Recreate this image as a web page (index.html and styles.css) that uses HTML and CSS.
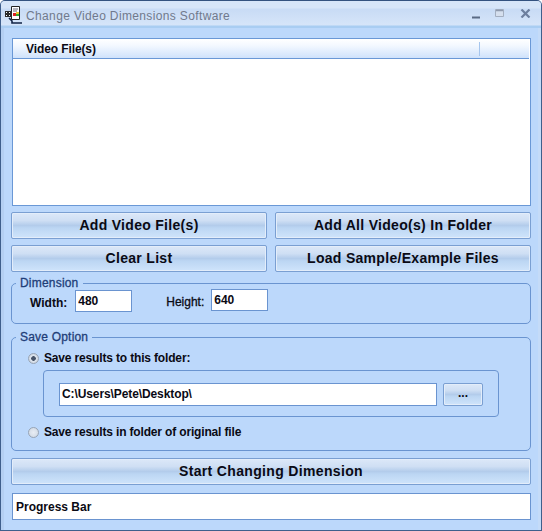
FILE: index.html
```html
<!doctype html>
<html lang="en">
<head>
<meta charset="UTF-8">
<title>Change Video Dimensions Software</title>
<link rel="stylesheet" href="styles.css">
</head>
<body>
<div class="window">
    <div class="titlebar">
        <svg class="app-icon" width="18" height="18" viewBox="0 0 18 18">
            <path d="M6.5 .5h8v13h-8z" fill="#fff" stroke="#222"/>
            <path d="M0 5h7v6H0z" fill="#2b2b2b"/>
            <path d="M1 6h1v1H1zM4 6h1v1H4zM1 9h1v1H1zM4 9h1v1H4z" fill="#fff"/>
            <path d="M8 3h5M8 5h4" stroke="#667"/>
            <path d="M8 7h3v3H8z" fill="#d22"/>
            <path d="M11 6h3v2h-3z" fill="#ec3"/>
            <path d="M11 8h3v2h-3z" fill="#3a3"/>
            <path d="M4 12l3 3v2h10" fill="none" stroke="#124" stroke-width="1.6"/>
        </svg>
        <span class="title">Change Video Dimensions Software</span>
        <div class="controls">
            <svg class="ctl-min" width="8" height="3" viewBox="0 0 8 3"><path d="M0 1.5h8" stroke="#5a6b85" stroke-width="2"/></svg>
            <svg width="10" height="9" viewBox="0 0 10 9"><path d="M.5.5h8v7h-8z" fill="#d5dfee" stroke="#a3aec0"/><path d="M1 1.5h7" stroke="#8f9aae" stroke-width="1.5"/></svg>
            <svg width="11" height="9" viewBox="0 0 11 9"><path d="M1.5.5l8 8M9.5.5l-8 8" stroke="#6d7f9e" stroke-width="2.2"/></svg>
        </div>
    </div>

    <div class="content">
        <div class="listbox">
            <div class="list-head">
                <span class="col-name">Video File(s)</span>
                <span class="col-rest"></span>
            </div>
        </div>

        <div class="btn-grid">
            <button class="btn">Add Video File(s)</button>
            <button class="btn">Add All Video(s) In Folder</button>
            <button class="btn">Clear List</button>
            <button class="btn">Load Sample/Example Files</button>
        </div>

        <fieldset class="group dimension">
            <legend>Dimension</legend>
            <label class="dim-label width-label">Width:</label>
            <input class="field dim-input width-input" value="480">
            <label class="dim-label height-label">Height:</label>
            <input class="field dim-input height-input" value="640">
        </fieldset>

        <fieldset class="group save">
            <legend>Save Option</legend>
            <div class="radio-row first">
                <span class="radio checked"></span>
                <span>Save results to this folder:</span>
            </div>
            <div class="folder-box">
                <input class="field folder-input" value="C:\Users\Pete\Desktop\">
                <button class="btn browse">...</button>
            </div>
            <div class="radio-row second">
                <span class="radio"></span>
                <span>Save results in folder of original file</span>
            </div>
        </fieldset>

        <button class="btn start">Start Changing Dimension</button>
        <div class="progress">Progress Bar</div>
    </div>
</div>
</body>
</html>
```

FILE: styles.css
```css
* {
    box-sizing: border-box;
}

html, body {
    margin: 0;
    padding: 0;
}

body {
    width: 542px;
    height: 531px;
    overflow: hidden;
    font-family: "Liberation Sans", Arial, sans-serif;
    font-size: 12px;
    font-weight: bold;
    color: #0a0a14;
}

.window {
    width: 542px;
    height: 531px;
    display: flex;
    flex-direction: column;
    background: #bcd8fb;
    border: 1px solid #3f5f8c;
    border-top-color: #33527f;
    border-radius: 5px 5px 0 0;
    box-shadow: inset -3px 0 0 #c4dbf8, inset 3px 0 0 #b4cff2;
}

.titlebar {
    height: 27px;
    flex: none;
    display: flex;
    align-items: center;
    padding: 0 10px 0 4px;
    background: linear-gradient(#d6e5f8 0, #d6e5f8 7px, #c8dbf5 8px, #d6e5f9 24px, #a9cdf2 25px, #a9cdf2 27px);
    border-radius: 4px 4px 0 0;
}

.app-icon {
    flex: none;
}

.title {
    margin-left: 3px;
    margin-top: 3px;
    font-weight: normal;
    font-size: 12px;
    letter-spacing: 0.36px;
    color: #70798c;
}

.controls {
    margin-left: auto;
    display: flex;
    align-items: center;
    gap: 15px;
    margin-top: -3px;
}

.ctl-min {
    margin-top: 8px;
}

.content {
    flex: 1;
    display: flex;
    flex-direction: column;
    padding: 10px 10px 0 10px;
}

.listbox {
    height: 168px;
    flex: none;
    margin: 0 0 0 1px;
    width: 519px;
    background: #fff;
    border: 1px solid #6a98d6;
}

.list-head {
    height: 20px;
    display: flex;
    align-items: center;
    background: linear-gradient(#ffffff, #f3f8ff 35%, #cfe2fb);
    border-bottom: 1px solid #6a98d6;
    margin-right: 1px;
}

.col-name {
    width: 467px;
    padding-left: 13px;
    line-height: 14px;
    letter-spacing: -0.1px;
    border-right: 1px solid #a6c6ee;
}

.btn {
    font-family: "Liberation Sans", Arial, sans-serif;
    font-weight: bold;
    color: #0a0a14;
    padding: 0 0 2px 0;
    border: 1px solid #7a9fd2;
    border-radius: 2px;
    background: linear-gradient(#dce8f8 0, #cfdff4 30%, #b3cceb 50%, #bcd6f3 60%, #cfe4fb 100%);
    box-shadow: inset 0 0 0 1px #e3edfa;
}

.btn-grid {
    margin-top: 6px;
    display: grid;
    grid-template-columns: 256px 256px;
    grid-auto-rows: 27px;
    column-gap: 8px;
    row-gap: 6px;
}

.btn-grid .btn {
    font-size: 14px;
    letter-spacing: 0.3px;
}

.group {
    margin: 0;
    min-width: 0;
    width: 520px;
    padding: 0;
    border: 1px solid #6a94d0;
    border-radius: 5px;
}

.group legend {
    margin-left: 4px;
    padding: 0 4px 0 4px;
    line-height: 14px;
    font-weight: normal;
    letter-spacing: 0.2px;
    color: #1f3e78;
    -webkit-text-stroke: 0.3px #1f3e78;
}

.dimension {
    margin-top: 4px;
    height: 48px;
    display: flex;
    align-items: flex-start;
}

.dim-label {
    line-height: 14px;
}

.width-label {
    margin: 6px 0 0 18px;
}

.height-label {
    margin: 5px 0 0 34px;
    font-weight: normal;
    -webkit-text-stroke: 0.3px #0a0a14;
}

.field {
    font-family: "Liberation Sans", Arial, sans-serif;
    font-size: 12px;
    font-weight: bold;
    color: #0a0a14;
    background: #fff;
    border: 1px solid #6a94d0;
    padding: 0 0 0 2px;
    outline: none;
    border-radius: 0;
}

.dim-input {
    width: 57px;
    height: 22px;
}

.width-input {
    margin: 0 0 0 8px;
}

.height-input {
    margin: -1px 0 0 7px;
}

.save {
    margin-top: 6px;
    height: 121px;
}

.radio-row {
    display: flex;
    align-items: center;
    gap: 5px;
    height: 14px;
    padding-left: 16px;
    letter-spacing: -0.16px;
}

.radio-row.first {
    margin-top: 7px;
}

.radio-row.second {
    margin-top: 8px;
}

.radio {
    width: 11px;
    height: 11px;
    flex: none;
    border-radius: 50%;
    border: 1px solid #98a4b4;
    background: radial-gradient(circle, #e8edf4 0, #cdd6e2 100%);
}

.radio.checked {
    background: radial-gradient(circle, #48556a 0, #48556a 2px, #dfe6ef 2.6px, #bfc9d6 100%);
}

.folder-box {
    margin: 5px 0 0 31px;
    width: 456px;
    height: 47px;
    display: flex;
    align-items: center;
    padding: 1px 0 0 15px;
    border: 1px solid #6a94d0;
    border-radius: 4px;
}

.folder-input {
    width: 378px;
    height: 23px;
    letter-spacing: -0.1px;
}

.browse {
    width: 40px;
    height: 23px;
    margin-left: 6px;
    font-size: 12px;
}

.start {
    flex: none;
    width: 520px;
    height: 27px;
    margin-top: 7px;
    font-size: 14px;
    letter-spacing: 0.34px;
}

.progress {
    margin: 8px 0 0 1px;
    width: 519px;
    height: 27px;
    flex: none;
    display: flex;
    align-items: center;
    padding-left: 3px;
    background: #fff;
    border: 1px solid #6a94d0;
}
```
